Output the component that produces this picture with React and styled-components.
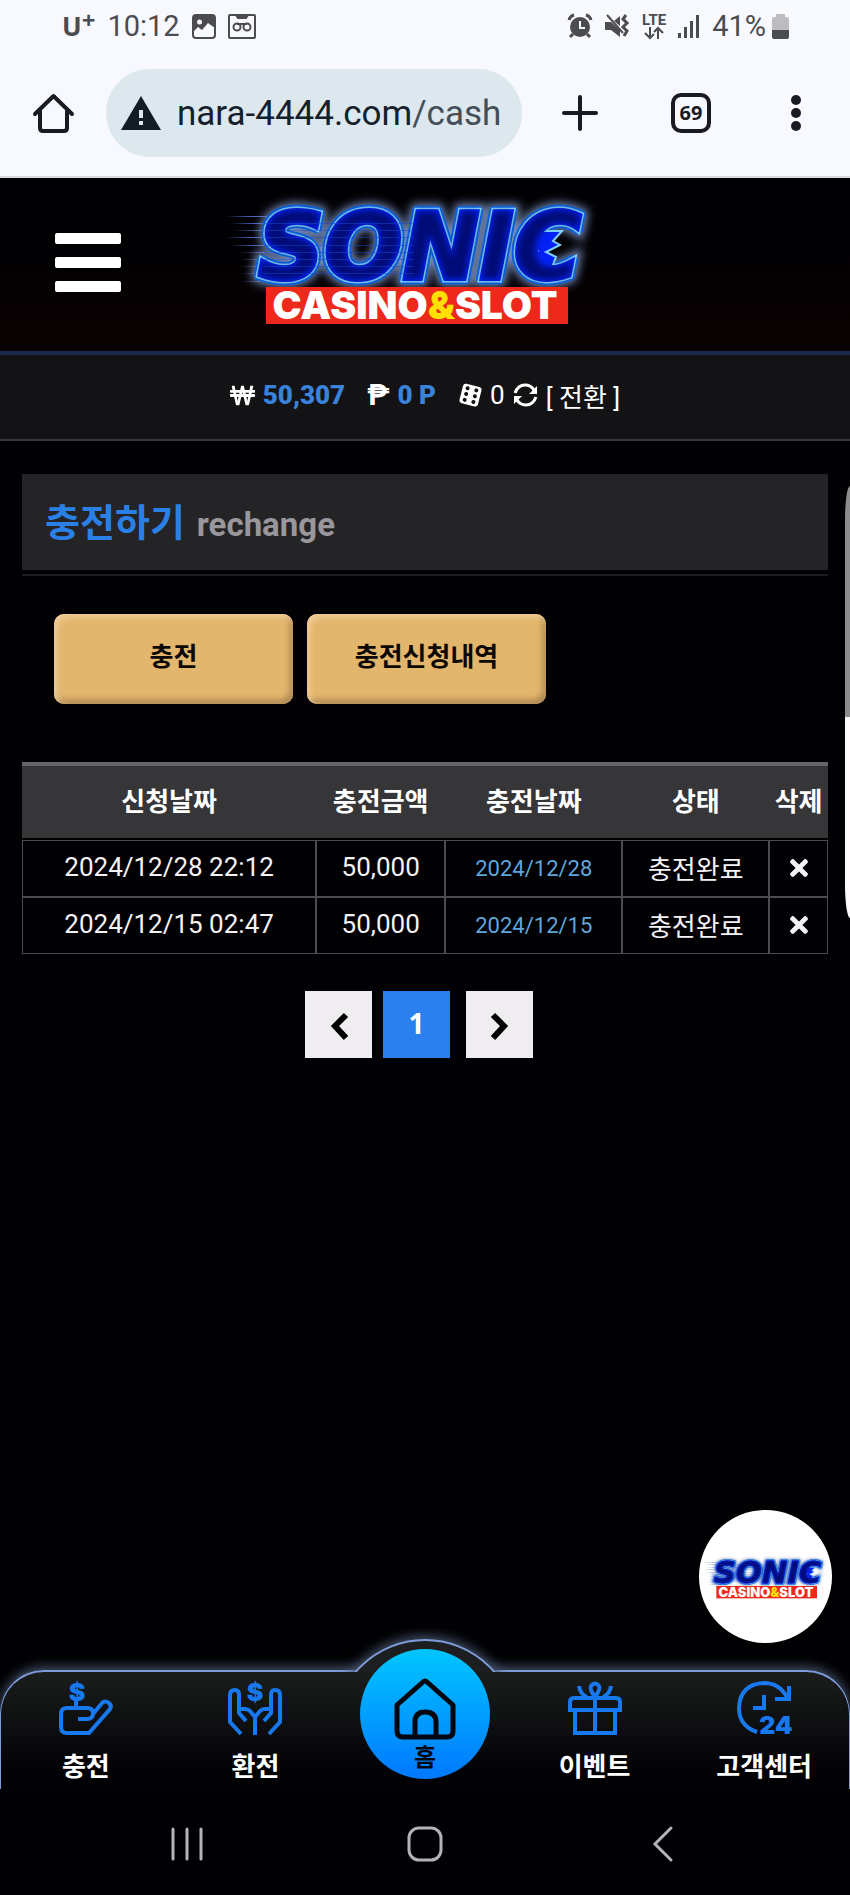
import React, { useId } from "react";
import styled, { createGlobalStyle } from "styled-components";
import { FaTimes, FaWonSign } from "react-icons/fa";

const GlobalStyle = createGlobalStyle`
  *,
  *::before {
    box-sizing: border-box;
  }
  body {
    margin: 0;
    background: #010003;
    color: #fff;
    font-family: Roboto, "Noto Sans CJK KR", sans-serif;
    font-size: 26px;
  }
  button {
    font-family: inherit;
    border: 0;
    padding: 0;
    background: none;
    color: inherit;
    cursor: pointer;
  }
  a {
    color: inherit;
    text-decoration: none;
  }
  svg {
    display: block;
    flex: none;
    overflow: visible;
  }
`;

const Page = styled.div`
  position: relative;
  min-height: 100vh;
  display: flex;
  flex-direction: column;
  overflow: hidden;
`;

//status bar
const StatusBar = styled.div`
  display: flex;
  align-items: center;
  justify-content: space-between;
  height: 50px;
  padding: 2px 61px 0 62px;
  background: #f8f9fe;
  color: #4b4c50;
  font-size: 29px;
`;
const StatusGroup = styled.div`
  display: flex;
  align-items: center;
  gap: 12px;
`;
const Carrier = styled.span`
  display: flex;
  font: 700 26px/32px "Noto Sans", sans-serif;
  sup {
    font-size: 24px;
    line-height: 20px;
    vertical-align: top;
  }
`;
const Lte = styled.span`
  display: flex;
  flex-direction: column;
  align-items: center;
  font-size: 15px;
  line-height: 14px;
  font-weight: 700;
`;
const Battery = styled.span`
  display: flex;
  align-items: center;
  gap: 6px;
`;

//browser bar
const BrowserBar = styled.div`
  display: flex;
  align-items: center;
  height: 128px;
  padding: 0 49px 0 33px;
  background: #f8f9fe;
  border-bottom: 2px solid #dcdce0;
  color: #1a1b22;
`;
const Address = styled.div`
  flex: 1;
  min-width: 0;
  display: flex;
  align-items: center;
  gap: 16px;
  height: 88px;
  margin: 0 40px 0 32px;
  padding: 0 18px 0 15px;
  border-radius: 44px;
  background: #dce7ee;
`;
const Url = styled.span`
  flex: 1;
  overflow: hidden;
  white-space: nowrap;
  font-size: 35px;
  color: #16202a;
  span {
    color: #434e57;
  }
`;
const TabCount = styled.button`
  width: 40px;
  height: 40px;
  margin: 0 80px 0 73px;
  border: 4px solid #1a1b22;
  border-radius: 10px;
  font: 700 20px/32px "Noto Sans", sans-serif;
`;

//site header
const Header = styled.header`
  display: grid;
  grid-template-columns: 1fr auto 1fr;
  align-items: center;
  height: 177px;
  padding: 0 75px 10px 55px;
  background: linear-gradient(#010003 40%, #0b0101);
  border-bottom: 4px solid #1a2a50;
`;
const Burger = styled.button`
  display: flex;
  flex-direction: column;
  gap: 13px;
  width: 66px;
  margin-top: 6px;
  span {
    height: 11px;
    border-radius: 2px;
    background: #fff;
  }
`;
const Points = styled.div`
  display: flex;
  align-items: center;
  justify-content: center;
  height: 86px;
  padding-bottom: 4px;
  background: #131215;
  border-bottom: 2px solid #38373a;
`;
const PointItem = styled.span`
  display: flex;
  align-items: center;
  gap: 8px;
  margin-right: 22px;
  font-weight: 700;
  b {
    color: #3983dc;
  }
`;
const Peso = styled.span`
  font-size: 30px;
  line-height: 30px;
`;
const Casino = styled.span`
  display: flex;
  align-items: center;
  gap: 8px;
`;

//content
const Main = styled.main`
  flex: 1;
  padding: 33px 22px;
`;
const TitleBox = styled.div`
  padding-bottom: 4px;
  border-bottom: 2px solid #1d1c1f;
`;
const Title = styled.h1`
  display: flex;
  align-items: baseline;
  gap: 12px;
  height: 96px;
  margin: 0;
  padding: 1px 23px 0;
  background: #242325;
  color: #2b80e6;
  font-size: 38px;
  line-height: 96px;
  small {
    font-size: 33px;
    color: #99979b;
  }
`;
const Actions = styled.div`
  display: flex;
  gap: 14px;
  margin: 38px 32px 58px;
`;
const GoldButton = styled.button`
  width: 239px;
  height: 90px;
  padding-bottom: 10px;
  border-radius: 10px;
  background: #e2b66c;
  box-shadow: inset 3px 3px 6px #f2cfa0, inset -3px -4px 6px #a98550;
  color: #0c0805;
  font-size: 26px;
  font-weight: 700;
`;
const Table = styled.table`
  width: 100%;
  table-layout: fixed;
  border-collapse: separate;
  border-spacing: 0;
  text-align: center;
  th {
    height: 78px;
    padding: 0 0 6px;
    border-top: 4px solid #666568;
    border-bottom: 2px solid #000;
    background: #363538;
    white-space: nowrap;
  }
  td {
    height: 57px;
    padding: 0 0 3px;
    border: 1px solid #4c4b4f;
    color: #f4f2f5;
  }
`;
const Col = styled.col`
  width: ${({ $width }) => $width};
`;
const DoneDate = styled.span`
  color: #5fa6dc;
  font-size: 22px;
`;
const Remove = styled.button`
  display: block;
  margin: 2px auto 0;
  font-size: 26px;
`;
const Pager = styled.nav`
  display: flex;
  justify-content: center;
  gap: 11px;
  margin: 37px 12px 0 0;
`;
const PageButton = styled.button`
  display: grid;
  place-items: center;
  width: 67px;
  height: 67px;
  margin-right: ${({ $active }) => ($active ? "5px" : 0)};
  padding-bottom: ${({ $active }) => ($active ? "4px" : 0)};
  background: ${({ $active }) => ($active ? "#2a80ef" : "#f0edf0")};
  color: ${({ $active }) => ($active ? "#fff" : "#000")};
  font: 700 28px "Noto Sans", sans-serif;
`;

//overlays
const Chat = styled.a`
  position: absolute;
  right: 18px;
  bottom: 252px;
  display: grid;
  place-items: center;
  width: 133px;
  height: 133px;
  border-radius: 50%;
  background: #fff;
`;
const EdgeHandle = styled.div`
  position: absolute;
  top: 486px;
  right: 0;
  width: 5px;
  height: 432px;
  border-radius: 5px 0 0 5px / 34px 0 0 34px;
  background: linear-gradient(#8e8d8e 231px, #fdfafd 231px);
`;

//bottom menu
const BottomNav = styled.nav`
  position: relative;
  display: grid;
  grid-template-columns: repeat(5, 1fr);
  height: 119px;
  border: solid #7d9bd9;
  border-width: 2px 1px 0;
  border-radius: 44px 44px 0 0;
  background: linear-gradient(#1b1d1d, #020204 85%);
  box-shadow: 0 -3px 12px #46536b;
  &::before {
    content: "";
    position: absolute;
    top: -33px;
    left: calc(50% - 92px);
    width: 184px;
    height: 184px;
    border: 2px solid #7d9bd9;
    border-radius: 50%;
    background: #1c1e1f;
    box-shadow: 0 -3px 12px #46536b;
    clip-path: inset(-24px 0 151px);
  }
`;
const NavItem = styled.a`
  display: flex;
  flex-direction: column;
  align-items: center;
  gap: 13px;
  padding-top: 9px;
  color: #1878ee;
  span {
    color: #fff;
    font-weight: 700;
    line-height: 38px;
  }
`;
const HomeItem = styled.a`
  position: relative;
  justify-self: center;
  display: flex;
  flex-direction: column;
  align-items: center;
  width: 130px;
  height: 130px;
  margin-top: -23px;
  padding-top: 29px;
  border-radius: 50%;
  background: linear-gradient(#00c6ff, #0078ff);
  color: #02060f;
  font-size: 24px;
  font-weight: 700;
  line-height: 36px;
`;
const SystemNav = styled.div`
  position: relative;
  display: grid;
  grid-template-columns: 1fr 1fr 1fr;
  place-items: center;
  height: 106px;
  padding: 4px 68px 0;
  background: #010003;
  color: #b4b3b6;
`;

const Logo = ({ width }) => {
  const id = useId().replace(/[^a-zA-Z0-9]/g, "");
  return (
    <svg
      width={width}
      viewBox="0 0 390 150"
      role="img"
      aria-label="Sonic Casino & Slot"
    >
      <defs>
        <filter id={`${id}glow`} x="-20%" y="-40%" width="140%" height="180%">
          <feGaussianBlur stdDeviation="5" />
        </filter>
        <filter id={`${id}soft`}>
          <feGaussianBlur stdDeviation="3" />
        </filter>
        <text
          id={`${id}word`}
          x="38"
          y="94"
          fontFamily="DejaVu Sans, sans-serif"
          fontWeight="700"
          fontStyle="italic"
          fontSize="92"
        >
          SONIC
        </text>
        <linearGradient id={`${id}speed`}>
          <stop offset="0" stopColor="#4860b8" stopOpacity="0" />
          <stop offset="0.4" stopColor="#4860b8" />
          <stop offset="1" stopColor="#4860b8" />
        </linearGradient>
      </defs>
      {[31, 38, 45, 52, 60, 67, 74, 81, 88, 96].map((y, i) => (
        <rect
          key={y}
          x={i < 5 ? 6 + (i % 3) * 4 : 20}
          y={y}
          width="60"
          height="1"
          fill={`url(#${id}speed)`}
        />
      ))}
      <use
        href={`#${id}word`}
        stroke="#7c93c4"
        strokeWidth="14"
        filter={`url(#${id}glow)`}
      />
      <use
        href={`#${id}word`}
        stroke="#0d63dc"
        strokeWidth="11"
        strokeLinejoin="round"
      />
      <use href={`#${id}word`} stroke="#7fd2ff" strokeWidth="7" />
      {/* quills */}
      <path
        d="M318 46L342 46L333 56L340 60L326 67L336 72L332 82L318 80Z"
        fill="#0422f6"
        stroke="#7fd2ff"
        strokeWidth="2"
      />
      <use
        href={`#${id}word`}
        fill="#0422f6"
        stroke="#0422f6"
        strokeWidth="4"
      />
      <path d="M310 52L328 54L318 66L326 76L310 76Z" fill="#0422f6" />
      <use
        href={`#${id}word`}
        fill="#020530"
        opacity="0.65"
        filter={`url(#${id}soft)`}
      />
      {[38, 45, 52, 60, 67, 74, 81, 88].map((y) => (
        <rect
          key={y}
          x="44"
          y={y}
          width="150"
          height="1"
          fill="#1a48d0"
          opacity="0.5"
        />
      ))}
      <rect x="46" y="102" width="302" height="37" fill="#ec291b" />
      <text
        x="195"
        y="134"
        textAnchor="middle"
        fill="#fff"
        fontFamily="Inter, sans-serif"
        fontWeight="900"
        fontSize="39"
      >
        CASINO<tspan fill="#ffe000">&amp;</tspan>SLOT
      </text>
    </svg>
  );
};

const PictureIcon = () => (
  <svg width="24" height="25" viewBox="0 0 24 25">
    <rect x="1" y="1" width="22" height="23" rx="3" fill="none" stroke="currentColor" strokeWidth="2" />
    <path d="M1 1H23V14L16 9L10 16L6 13L1 18Z" fill="currentColor" />
    <circle cx="7.500" cy="8" r="2.500" fill="#f8f9fe" />
  </svg>
);

const TapeIcon = () => (
  <svg width="28" height="25" viewBox="0 0 28 25" fill="none" stroke="currentColor" strokeWidth="2">
    <rect x="1" y="1" width="26" height="23" rx="1" />
    <path d="M8 1L10 4H18L20 1Z" fill="currentColor" />
    <circle cx="9" cy="13" r="3.500" />
    <circle cx="19" cy="13" r="3.500" />
    <path d="M9 10H19" />
  </svg>
);

const AlarmIcon = () => (
  <svg width="24" height="24" viewBox="0 0 24 24" fill="none" stroke="currentColor" strokeWidth="2">
    <circle cx="12" cy="13" r="10" fill="currentColor" stroke="none" />
    <path d="M1 6Q2 2 6 1M23 6Q22 2 18 1M5 20L2 23M19 20L22 23" strokeWidth="3" />
    <path d="M12 7V14H17" stroke="#f8f9fe" />
  </svg>
);

const MuteIcon = () => (
  <svg width="26" height="24" viewBox="0 0 26 24" fill="none" stroke="currentColor" strokeWidth="2">
    <path d="M1 8H7L16 16V23L7 16H1ZM10 7L16 2V12Z" fill="currentColor" stroke="none" />
    <path d="M3 1L19 19" />
    <path d="M22 1L19 5L23 9L19 13L23 17L20 22" strokeWidth="3" />
  </svg>
);

const LteArrows = () => (
  <svg width="20" height="12" viewBox="0 0 20 12" fill="none" stroke="currentColor" strokeWidth="2">
    <path d="M6 0V10M1 6L6 11L10 7M14 12V2M10 5L14 1L19 6" />
  </svg>
);

const SignalIcon = () => (
  <svg width="22" height="24" viewBox="0 0 22 24" fill="currentColor">
    <path d="M0 19H3V24H0ZM6 13H9V24H6ZM12 7H15V24H12ZM18 1H21V24H18Z" />
  </svg>
);

const BatteryIcon = () => (
  <svg width="17" height="25" viewBox="0 0 17 25">
    <path d="M4 0H13V3H15Q17 3 17 5V16H0V5Q0 3 2 3H4Z" fill="#bdbdc1" />
    <path d="M0 16H17V23Q17 25 15 25H2Q0 25 0 23Z" fill="currentColor" />
  </svg>
);

const BrowserHomeIcon = () => (
  <svg width="41" height="41" viewBox="0 0 41 41" fill="none" stroke="currentColor" strokeWidth="4">
    <path d="M2 21L20.500 3L39 21M7 18V35Q7 38 10 38H31Q34 38 34 35V18" strokeLinecap="round" strokeLinejoin="round" />
  </svg>
);

const WarningIcon = () => (
  <svg width="40" height="34" viewBox="0 0 40 34">
    <path d="M20 0L40 34H0Z" fill="#131c24" />
    <path d="M18 14H22V22H18ZM18 25H22V29H18Z" fill="#dce7ee" />
  </svg>
);

const PlusIcon = () => (
  <svg width="36" height="36" viewBox="0 0 36 36" stroke="currentColor" strokeWidth="4" strokeLinecap="round">
    <path d="M18 2V34M2 18H34" />
  </svg>
);

const DotsIcon = () => (
  <svg width="10" height="36" viewBox="0 0 10 36" fill="currentColor">
    <circle cx="5" cy="5" r="5" />
    <circle cx="5" cy="18" r="5" />
    <circle cx="5" cy="31" r="5" />
  </svg>
);

const DiceIcon = () => (
  <svg width="24" height="24" viewBox="0 0 24 24">
    <g transform="rotate(14 12 12)">
      <rect x="3" y="2" width="19" height="20" rx="3" fill="#fff" />
      {[6, 12, 18].map((y) => (
        <g key={y} fill="#131215">
          <circle cx="8" cy={y} r="2" />
          <circle cx="17" cy={y} r="2" />
        </g>
      ))}
    </g>
  </svg>
);

const RefreshIcon = () => (
  <svg width="25" height="24" viewBox="0 0 25 24" fill="none" stroke="#fff" strokeWidth="3">
    <path d="M2 10Q5 2 12 2Q18 2 21 7M23 14Q20 22 13 22Q7 22 4 17" />
    <path d="M24 3V11H16ZM1 21V13H9Z" fill="#fff" stroke="none" />
  </svg>
);

const Chevron = ({ next }) => (
  <svg width="20" height="30" viewBox="0 0 20 30" fill="none" stroke="currentColor" strokeWidth="6">
    <path d={next ? "M3 5L14 16L3 28" : "M17 5L6 16L17 28"} />
  </svg>
);

const line = { fill: "none", stroke: "currentColor", strokeWidth: 4 };

const label = {
  textAnchor: "middle",
  fill: "currentColor",
  stroke: "none",
  fontFamily: "Inter, sans-serif",
  fontWeight: 900,
  fontSize: 25,
};

const DepositIcon = () => (
  <svg width="54" height="54" viewBox="0 0 54 54" {...line}>
    <path d="M19 38H28Q34 38 34 32Q34 27 28 27H8Q2 27 2 33V46Q2 52 8 52H30L51 28Q53 25 50 22Q46 19 43 22L34 33M17 20V27" />
    <text x="18" y="20" {...label}>
      $
    </text>
  </svg>
);

const WithdrawIcon = () => (
  <svg width="54" height="54" viewBox="0 0 54 54" {...line}>
    <path d="M13 53L2 41V14Q2 9 7 9Q11 9 11 14V32L18 40M11 28H17Q20 28 22 30L27 36V54" />
    <path d="M41 53L52 41V14Q52 9 47 9Q43 9 43 14V32L36 40M43 28H37Q34 28 32 30L27 36" />
    <text x="27" y="20" {...label}>
      $
    </text>
  </svg>
);

const HomeIcon = () => (
  <svg width="62" height="62" viewBox="0 0 62 62" fill="none" stroke="currentColor" strokeWidth="5" strokeLinejoin="round">
    <path d="M3 27L29 4Q31 2 33 4L59 27V53Q59 59 53 59H9Q3 59 3 53Z" />
    <path d="M21 59V44Q21 34 31 34Q42 34 42 44V59" />
  </svg>
);

const EventIcon = () => (
  <svg width="54" height="54" viewBox="0 0 54 54" {...line}>
    <path d="M2 29V21Q2 17 6 17H48Q52 17 52 21V29ZM7 29V52H47V29M27 17V52" />
    <path d="M27 16Q21 8 23 5Q27 0 31 5Q33 8 27 16ZM11 5Q12 13 19 16M43 5Q42 13 35 16" />
  </svg>
);

const SupportIcon = () => (
  <svg width="54" height="54" viewBox="0 0 54 54" {...line}>
    <path d="M20 51Q2 45 2 27Q3 3 27 2Q42 2 50 16M52 5V18H38M27 14V27H16" />
    <text x="39" y="53" {...label}>
      24
    </text>
  </svg>
);

const columns = [
  { name: "신청날짜", width: "36.5%" },
  { name: "충전금액", width: "16%" },
  { name: "충전날짜", width: "22%" },
  { name: "상태", width: "18.2%" },
  { name: "삭제", width: "7.3%" },
];

const rows = [
  { requested: "2024/12/28 22:12", amount: "50,000", done: "2024/12/28" },
  { requested: "2024/12/15 02:47", amount: "50,000", done: "2024/12/15" },
];

const App = () => {
  return (
    <>
      <GlobalStyle />
      <Page>
        <StatusBar>
          <StatusGroup>
            <Carrier>
              U<sup>+</sup>
            </Carrier>
            <span>10:12</span>
            <PictureIcon />
            <TapeIcon />
          </StatusGroup>
          <StatusGroup>
            <AlarmIcon />
            <MuteIcon />
            <Lte>
              LTE
              <LteArrows />
            </Lte>
            <SignalIcon />
            <Battery>
              41%
              <BatteryIcon />
            </Battery>
          </StatusGroup>
        </StatusBar>
        <BrowserBar>
          <button aria-label="Home">
            <BrowserHomeIcon />
          </button>
          <Address>
            <WarningIcon />
            <Url>
              nara-4444.com<span>/cash</span>
            </Url>
          </Address>
          <button aria-label="New tab">
            <PlusIcon />
          </button>
          <TabCount>69</TabCount>
          <button aria-label="More">
            <DotsIcon />
          </button>
        </BrowserBar>

        <Header>
          <Burger aria-label="Menu">
            <span />
            <span />
            <span />
          </Burger>
          <a href="#main">
            <Logo width={390} />
          </a>
        </Header>
        <Points>
          <PointItem>
            <FaWonSign size={25} />
            <b>50,307</b>
          </PointItem>
          <PointItem>
            <Peso>₱</Peso>
            <b>0 P</b>
          </PointItem>
          <Casino>
            <DiceIcon />
            <span>0</span>
            <RefreshIcon />
            <a href="#exchange">[ 전환 ]</a>
          </Casino>
        </Points>

        <Main id="main">
          <TitleBox>
            <Title>
              충전하기 <small>rechange</small>
            </Title>
          </TitleBox>
          <Actions>
            <GoldButton>충전</GoldButton>
            <GoldButton>충전신청내역</GoldButton>
          </Actions>
          <Table>
            <colgroup>
              {columns.map((c) => (
                <Col key={c.name} $width={c.width} />
              ))}
            </colgroup>
            <thead>
              <tr>
                {columns.map((c) => (
                  <th key={c.name}>{c.name}</th>
                ))}
              </tr>
            </thead>
            <tbody>
              {rows.map((row) => (
                <tr key={row.requested}>
                  <td>{row.requested}</td>
                  <td>{row.amount}</td>
                  <td>
                    <DoneDate>{row.done}</DoneDate>
                  </td>
                  <td>충전완료</td>
                  <td>
                    <Remove aria-label="삭제">
                      <FaTimes />
                    </Remove>
                  </td>
                </tr>
              ))}
            </tbody>
          </Table>
          <Pager>
            <PageButton aria-label="Previous">
              <Chevron />
            </PageButton>
            <PageButton $active>1</PageButton>
            <PageButton aria-label="Next">
              <Chevron next />
            </PageButton>
          </Pager>
        </Main>

        {/* bottom menu */}
        <BottomNav>
          <NavItem href="#deposit">
            <DepositIcon />
            <span>충전</span>
          </NavItem>
          <NavItem href="#withdraw">
            <WithdrawIcon />
            <span>환전</span>
          </NavItem>
          <HomeItem href="#home">
            <HomeIcon />
            홈
          </HomeItem>
          <NavItem href="#event">
            <EventIcon />
            <span>이벤트</span>
          </NavItem>
          <NavItem href="#support">
            <SupportIcon />
            <span>고객센터</span>
          </NavItem>
        </BottomNav>
        <SystemNav>
          <button aria-label="Recent apps">
            <svg width="34" height="34" stroke="currentColor" strokeWidth="3" strokeLinecap="round">
              <path d="M3 2V32M17 2V32M31 2V32" />
            </svg>
          </button>
          <button aria-label="System home">
            <svg width="36" height="36" fill="none" stroke="currentColor" strokeWidth="3">
              <rect x="2" y="2" width="32" height="32" rx="10" />
            </svg>
          </button>
          <button aria-label="Back">
            <svg width="20" height="36" fill="none" stroke="currentColor" strokeWidth="3" strokeLinecap="round">
              <path d="M18 2L2 18L18 34" />
            </svg>
          </button>
        </SystemNav>

        <Chat href="#chat">
          <Logo width={130} />
        </Chat>
        <EdgeHandle />
      </Page>
    </>
  );
};

export default App;
